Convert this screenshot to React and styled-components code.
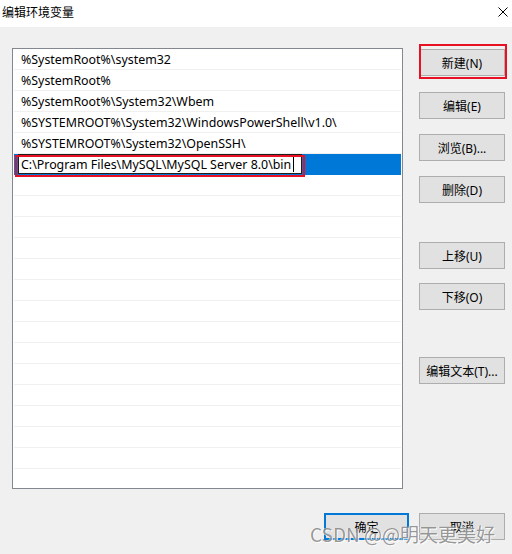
import React from 'react'
import styled, { createGlobalStyle } from 'styled-components'

const GlobalStyle = createGlobalStyle`
  html, body {
    margin: 0;
    padding: 0;
    background: #f0f0f0;
  }
  body {
    font-family: "Noto Sans", "Noto Sans CJK SC", sans-serif;
    font-size: 12px;
    color: #000;
  }
`

const paths = [
  '%SystemRoot%\\system32',
  '%SystemRoot%',
  '%SystemRoot%\\System32\\Wbem',
  '%SYSTEMROOT%\\System32\\WindowsPowerShell\\v1.0\\',
  '%SYSTEMROOT%\\System32\\OpenSSH\\',
]

const editing = 'C:\\Program Files\\MySQL\\MySQL Server 8.0\\bin'

const sideButtons = [
  { label: '新建(N)', gap: 1 },
  { label: '编辑(E)', gap: 16 },
  { label: '浏览(B)...', gap: 15 },
  { label: '删除(D)', gap: 15 },
  { label: '上移(U)', gap: 39 },
  { label: '下移(O)', gap: 14 },
  { label: '编辑文本(T)...', gap: 47 },
]

export default function App() {
  const emptyRows = Array.from({ length: 16 })

  return (
    <>
      <GlobalStyle />
      <Window>
        <TitleBar>
          <Title>编辑环境变量</Title>
          <CloseIcon width="10" height="10" viewBox="0 0 10 10">
            <path d="M0.5 0.5 L9.5 9.5 M9.5 0.5 L0.5 9.5" stroke="#000" strokeWidth="1" fill="none" />
          </CloseIcon>
        </TitleBar>

        <Body>
          <ListBox>
            {paths.map((p) => (
              <Row key={p}>
                <RowText>{p}</RowText>
              </Row>
            ))}
            <Row selected>
              <EditBox>
                {editing}
                <Caret />
              </EditBox>
            </Row>
            {emptyRows.map((_, i) => (
              <Row key={i} />
            ))}
          </ListBox>

          <Side>
            {sideButtons.map((b) => (
              <SideButton key={b.label} gap={b.gap}>
                {b.label}
              </SideButton>
            ))}
          </Side>
        </Body>

        <Footer>
          <DialogButton primary>确定</DialogButton>
          <DialogButton>取消</DialogButton>
        </Footer>

        <Marker style={{ left: 419, top: 44, width: 88, height: 35 }} />
        <Marker style={{ left: 15, top: 155, width: 290, height: 22 }} />
        <Watermark>CSDN @@明天更美好</Watermark>
      </Window>
    </>
  )
}

const Window = styled.div`
  position: relative;
  width: 512px;
  height: 554px;
  overflow: hidden;
  background: #f0f0f0;
`

const TitleBar = styled.div`
  height: 27px;
  background: #fff;
  display: flex;
  align-items: center;
  justify-content: space-between;
  padding: 0 3px 0 2px;
  box-sizing: border-box;
`

const Title = styled.div`
  font-family: "Noto Sans CJK SC", sans-serif;
  font-size: 12px;
  line-height: 1;
  margin-top: -3px;
`

const CloseIcon = styled.svg`
  margin-top: -3px;
  margin-right: 1px;
`

const Body = styled.div`
  display: flex;
  align-items: flex-start;
  padding: 21px 0 0 12px;
`

const ListBox = styled.div`
  width: 391px;
  height: 441px;
  box-sizing: border-box;
  border: 1px solid #828790;
  background: #fff;
  padding: 0 1px;
  overflow: hidden;
`

const Row = styled.div`
  height: 21px;
  box-sizing: border-box;
  display: flex;
  align-items: center;
  border-bottom: 1px solid ${(p) => (p.selected ? '#0078d7' : '#f0f0f0')};
  background: ${(p) => (p.selected ? '#0078d7' : 'transparent')};
`

const RowText = styled.span`
  padding: 2px 0 0 7px;
  font-size: 12.4px;
  white-space: nowrap;
  line-height: 20px;
`

const EditBox = styled.div`
  margin-left: 4px;
  width: 284px;
  height: 20px;
  box-sizing: border-box;
  border: 1px solid #1e1e1e;
  background: #fff;
  display: flex;
  align-items: center;
  padding: 1px 0 0 2px;
  font-size: 12.4px;
  white-space: nowrap;
  line-height: 18px;
`

const Caret = styled.span`
  display: inline-block;
  width: 1px;
  height: 15px;
  margin-left: 2px;
  background: #000;
`

const Side = styled.div`
  display: flex;
  flex-direction: column;
  margin-left: 16px;
`

const SideButton = styled.div`
  width: 86px;
  height: 27px;
  margin-top: ${(p) => p.gap}px;
  box-sizing: border-box;
  background: #e1e1e1;
  border: 1px solid #adadad;
  display: flex;
  align-items: center;
  justify-content: center;
  white-space: nowrap;
`

const Footer = styled.div`
  display: flex;
  justify-content: flex-end;
  gap: 10px;
  padding: 24px 7px 0 0;
`

const DialogButton = styled.div`
  width: ${(p) => (p.primary ? 85 : 86)}px;
  height: 27px;
  box-sizing: border-box;
  background: #e1e1e1;
  border: ${(p) => (p.primary ? '2px solid #0078d7' : '1px solid #adadad')};
  display: flex;
  align-items: center;
  justify-content: center;
`

const Marker = styled.div`
  position: absolute;
  box-sizing: border-box;
  border: 2px solid #e81123;
  pointer-events: none;
`

const Watermark = styled.div`
  position: absolute;
  left: 310px;
  top: 520px;
  font-family: "Noto Sans CJK SC", sans-serif;
  font-size: 19px;
  color: rgba(120, 120, 120, 0.75);
  text-shadow: 1px 1px 0 rgba(255, 255, 255, 0.9), -1px 0 0 rgba(255, 255, 255, 0.6);
  white-space: nowrap;
  pointer-events: none;
`
